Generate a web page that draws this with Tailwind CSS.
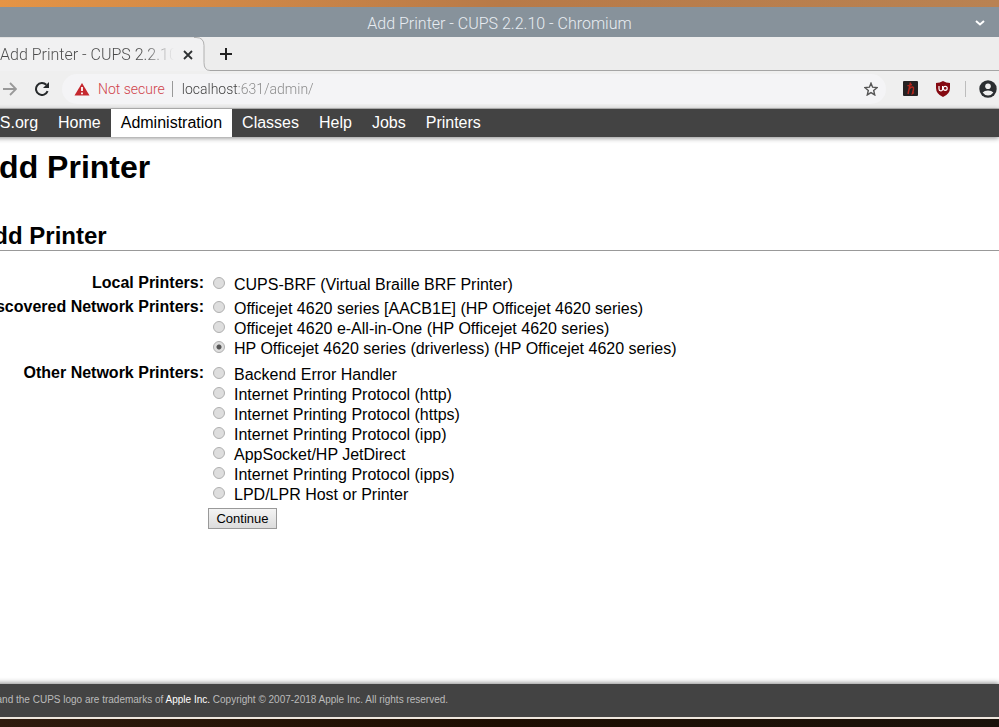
<!DOCTYPE html>
<html lang="en">
<head>
    <meta charset="UTF-8">
    <meta name="viewport" content="width=device-width, initial-scale=1.0">
    <title>Add Printer - CUPS 2.2.10</title>
    <script src="https://cdn.jsdelivr.net/npm/@tailwindcss/browser@4"></script>
</head>
<body class="min-h-screen flex flex-col overflow-x-hidden bg-white text-black font-['Liberation_Sans',Arial,sans-serif]">

<!-- Desktop wallpaper -->
<div class="h-[7px] shrink-0 bg-linear-to-r from-[#e59445] via-[#b87a48] to-[#b98252]"></div>

<!-- Window title bar -->
<header class="h-[30px] pt-[3px] shrink-0 relative flex items-center justify-center bg-[#87929b] text-[#e8edf2] font-['Roboto',sans-serif] font-light">
    <span class="text-base">Add Printer - CUPS 2.2.10 - Chromium</span>
    <button class="absolute right-[14px] top-3" aria-label="Minimize">
        <svg class="w-[10px] h-2" viewBox="0 0 10 8" fill="none" stroke="#fff" stroke-width="2">
            <path d="M1 2l4 3.5L9 2"></path>
        </svg>
    </button>
</header>

<!-- Tab strip -->
<div class="h-[34px] shrink-0 flex bg-[#ededed] font-['Roboto',sans-serif] font-light">
    <div class="w-[194px] shrink-0 flex items-center border-t border-[#e2e2e2] bg-[#f1f1f2]">
        <span class="w-[174px] overflow-hidden whitespace-nowrap text-base text-transparent bg-clip-text bg-linear-[90deg,#4a4a4a_144px,transparent_174px]">Add Printer - CUPS 2.2.10</span>
        <button class="ml-2" aria-label="Close tab">
            <svg class="w-3 h-3" viewBox="0 0 12 12" stroke="#2e3133" stroke-width="1.8">
                <path d="M2 2l8 8M10 2l-8 8"></path>
            </svg>
        </button>
    </div>
    <svg class="w-4 h-[34px] shrink-0" viewBox="0 0 16 34">
        <path d="M0 .5h2q8 0 8 8v17q0 8 6 8V34H0z" fill="#f1f1f2"></path>
        <path d="M0 .5h2q8 0 8 8v17q0 8 6 8" fill="none" stroke="#b0b0b0"></path>
    </svg>
    <div class="flex-1 flex items-center pl-[10px] border-b border-[#a5a5a5]">
        <button aria-label="New tab">
            <svg class="w-3 h-3" viewBox="0 0 12 12" stroke="#222" stroke-width="2">
                <path d="M6 0v12M0 6h12"></path>
            </svg>
        </button>
    </div>
</div>

<!-- Toolbar -->
<div class="h-[38px] pb-[2px] shrink-0 flex items-center bg-[#efefef] border-b border-[#b5b5b5] font-['Roboto',sans-serif] font-light text-sm">
    <button class="ml-[3px]" aria-label="Forward">
        <svg class="w-[14px] h-[14px]" viewBox="0 0 14 14" fill="none" stroke="#999" stroke-width="1.8">
            <path d="M0 7h13M7 1l6 6-6 6"></path>
        </svg>
    </button>
    <button class="ml-[18px]" aria-label="Reload">
        <svg class="w-[14px] h-[14px]" viewBox="0 0 14 14">
            <path d="M12.600 9.200A6 6 0 1 1 11.300 2.800" fill="none" stroke="#26292b" stroke-width="2"></path>
            <path d="M14 0v6H8z" fill="#26292b"></path>
        </svg>
    </button>
    <div class="ml-[13px] h-[30px] flex-1 flex items-center rounded-full bg-[#f4f4f6] pl-3 pr-2">
        <svg class="w-4 h-[14px]" viewBox="0 0 16 14">
            <path d="M8 1l7.500 12.500H.5z" fill="#c5282f"></path>
            <path d="M8 5v4M8 10.500v1.800" stroke="#fff" stroke-width="1.8"></path>
        </svg>
        <span class="ml-2 text-[#d0434b]">Not secure</span>
        <span class="ml-[7px] mr-[9px] w-px h-4 bg-[#999]"></span>
        <input type="text" aria-label="Address" value="localhost:631/admin/" class="flex-1 min-w-0 outline-none text-transparent bg-clip-text bg-linear-[90deg,#3c3c3c_57px,#868686_57px]">
        <button aria-label="Bookmark this page">
            <svg class="w-[14px] h-[14px]" viewBox="0 0 14 14" fill="none" stroke="#555" stroke-width="1.4">
                <path d="M7 1.200l1.600 4 4.500.4-3.400 2.900 1 4.400L7 10.600l-3.700 2.300 1-4.400L.9 5.600l4.500-.4z"></path>
            </svg>
        </button>
    </div>
    <button class="ml-[17px]" aria-label="Honey extension">
        <svg class="w-[15px] h-[15px]" viewBox="0 0 15 15">
            <rect width="15" height="15" rx="1" fill="#252122"></rect>
            <path d="M7.500 1.500L5 13M4.500 4.800l4.500-1.300M6.200 8q2-2.500 3.600-2 1.200.5.600 3l-.9 3.500 1.500-1" fill="none" stroke="#b3261c" stroke-width="1.5"></path>
        </svg>
    </button>
    <button class="ml-[17px]" aria-label="uBlock Origin">
        <svg class="w-4 h-4" viewBox="0 0 16 16">
            <path d="M8 0q3 2 7 2v5q0 6-7 9Q1 13 1 7V2q4 0 7-2z" fill="#850911"></path>
            <path d="M4 5v3q0 1.800 1.800 1.800T7.600 8V5" fill="none" stroke="#fff" stroke-width="1.2"></path>
            <circle cx="10.200" cy="7.300" r="2" fill="none" stroke="#fff" stroke-width="1.2"></circle>
        </svg>
    </button>
    <span class="ml-[14px] w-px h-4 bg-[#bdbdbd]"></span>
    <button class="ml-[13px] mr-[2px]" aria-label="Profile">
        <svg class="w-[18px] h-[18px]" viewBox="0 0 18 18">
            <circle cx="9" cy="9" r="8.700" fill="#2b2e31"></circle>
            <circle cx="9" cy="6.200" r="2.800" fill="#efefef"></circle>
            <path d="M3.600 12.600Q5.500 10.400 9 10.400t5.400 2.200Q12.500 15.500 9 15.500t-5.400-2.900z" fill="#efefef"></path>
        </svg>
    </button>
</div>

<!-- CUPS page, scrolled a little to the right -->
<div class="flex-1 flex flex-col -ml-11">
    <nav class="h-7 shrink-0 flex bg-[#434343] text-white text-base leading-7 shadow-[0_1px_5px_#888]">
        <a href="/" class="px-[10px]">CUPS.org</a>
        <a href="/" class="px-[10px]">Home</a>
        <a href="/admin" class="px-[10px] bg-white text-black">Administration</a>
        <a href="/classes/" class="px-[10px]">Classes</a>
        <a href="/help/" class="px-[10px]">Help</a>
        <a href="/jobs/" class="px-[10px]">Jobs</a>
        <a href="/printers/" class="px-[10px]">Printers</a>
    </nav>

    <main class="flex-1 pl-5 pt-3">
        <h1 class="text-[32px] leading-9 font-bold">Add Printer</h1>
        <h2 class="mt-[37px] border-b border-[#999] text-2xl leading-7 font-bold">Add Printer</h2>

        <form class="mt-[22px]">
            <table class="text-base leading-5">
                <tr>
                    <th class="w-[232px] pr-1 align-top text-right whitespace-nowrap">Local Printers:</th>
                    <td class="py-[2px]">
                        <label class="flex whitespace-nowrap"><input type="radio" name="device" class="appearance-none w-3 h-3 shrink-0 mt-[2px] ml-[5px] mr-[9px] rounded-full border border-[#b0b0b0] bg-[#dedede]">CUPS-BRF (Virtual Braille BRF Printer)</label>
                    </td>
                </tr>
                <tr>
                    <th class="pr-1 align-top text-right whitespace-nowrap">Discovered Network Printers:</th>
                    <td class="pt-[2px] pb-1">
                        <label class="flex whitespace-nowrap"><input type="radio" name="device" class="appearance-none w-3 h-3 shrink-0 mt-[2px] ml-[5px] mr-[9px] rounded-full border border-[#b0b0b0] bg-[#dedede]">Officejet 4620 series [AACB1E] (HP Officejet 4620 series)</label>
                        <label class="flex whitespace-nowrap"><input type="radio" name="device" class="appearance-none w-3 h-3 shrink-0 mt-[2px] ml-[5px] mr-[9px] rounded-full border border-[#b0b0b0] bg-[#dedede]">Officejet 4620 e-All-in-One (HP Officejet 4620 series)</label>
                        <label class="flex whitespace-nowrap"><input type="radio" name="device" checked class="appearance-none w-3 h-3 shrink-0 mt-[2px] ml-[5px] mr-[9px] rounded-full border border-[#b0b0b0] bg-[radial-gradient(circle,#555_2px,#dedede_3px)]">HP Officejet 4620 series (driverless) (HP Officejet 4620 series)</label>
                    </td>
                </tr>
                <tr>
                    <th class="pr-1 align-top text-right whitespace-nowrap">Other Network Printers:</th>
                    <td class="pt-[2px] pb-px">
                        <label class="flex whitespace-nowrap"><input type="radio" name="device" class="appearance-none w-3 h-3 shrink-0 mt-[2px] ml-[5px] mr-[9px] rounded-full border border-[#b0b0b0] bg-[#dedede]">Backend Error Handler</label>
                        <label class="flex whitespace-nowrap"><input type="radio" name="device" class="appearance-none w-3 h-3 shrink-0 mt-[2px] ml-[5px] mr-[9px] rounded-full border border-[#b0b0b0] bg-[#dedede]">Internet Printing Protocol (http)</label>
                        <label class="flex whitespace-nowrap"><input type="radio" name="device" class="appearance-none w-3 h-3 shrink-0 mt-[2px] ml-[5px] mr-[9px] rounded-full border border-[#b0b0b0] bg-[#dedede]">Internet Printing Protocol (https)</label>
                        <label class="flex whitespace-nowrap"><input type="radio" name="device" class="appearance-none w-3 h-3 shrink-0 mt-[2px] ml-[5px] mr-[9px] rounded-full border border-[#b0b0b0] bg-[#dedede]">Internet Printing Protocol (ipp)</label>
                        <label class="flex whitespace-nowrap"><input type="radio" name="device" class="appearance-none w-3 h-3 shrink-0 mt-[2px] ml-[5px] mr-[9px] rounded-full border border-[#b0b0b0] bg-[#dedede]">AppSocket/HP JetDirect</label>
                        <label class="flex whitespace-nowrap"><input type="radio" name="device" class="appearance-none w-3 h-3 shrink-0 mt-[2px] ml-[5px] mr-[9px] rounded-full border border-[#b0b0b0] bg-[#dedede]">Internet Printing Protocol (ipps)</label>
                        <label class="flex whitespace-nowrap"><input type="radio" name="device" class="appearance-none w-3 h-3 shrink-0 mt-[2px] ml-[5px] mr-[9px] rounded-full border border-[#b0b0b0] bg-[#dedede]">LPD/LPR Host or Printer</label>
                    </td>
                </tr>
                <tr>
                    <td></td>
                    <td class="py-[2px]">
                        <button type="submit" class="block h-[21px] w-[69px] border border-[#999] bg-linear-to-b from-[#f4f4f4] to-[#dcdcdc] text-[13px] leading-[19px]">Continue</button>
                    </td>
                </tr>
            </table>
        </form>
    </main>

    <footer class="h-[33px] shrink-0 pl-[10px] bg-[#434343] text-[#bbb] text-[10px] leading-[31px] whitespace-nowrap shadow-[0_-1px_5px_#888]">
        CUPS and the CUPS logo are trademarks of <a href="http://www.apple.com" class="text-white">Apple Inc.</a> Copyright © 2007-2018 Apple Inc. All rights reserved.
    </footer>
</div>

<!-- Window edge and wallpaper -->
<div class="h-[10px] shrink-0 border-t-2 border-[#eee6dd] bg-linear-to-r from-[#2e1b0e] via-[#1d0e02] to-[#1a120b]"></div>

</body>
</html>
